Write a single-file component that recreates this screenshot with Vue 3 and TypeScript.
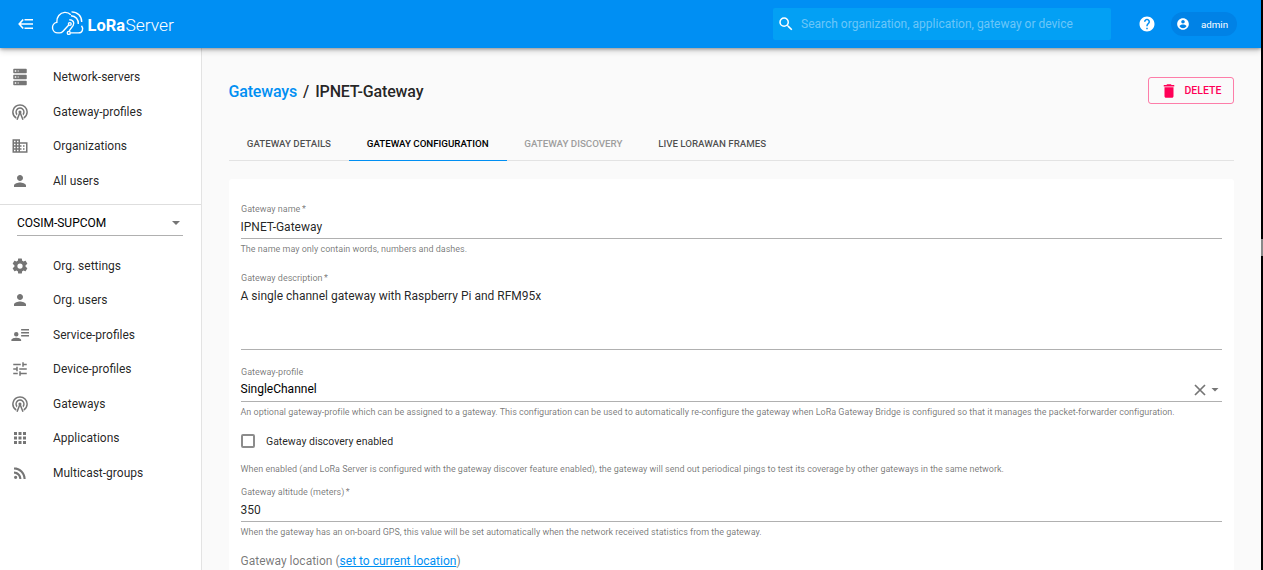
<script setup lang="ts">
const icons: Record<string, string> = {
  servers:
    'M4 1h16a1 1 0 0 1 1 1v4a1 1 0 0 1-1 1H4a1 1 0 0 1-1-1V2a1 1 0 0 1 1-1m0 8h16a1 1 0 0 1 1 1v4a1 1 0 0 1-1 1H4a1 1 0 0 1-1-1v-4a1 1 0 0 1 1-1m0 8h16a1 1 0 0 1 1 1v4a1 1 0 0 1-1 1H4a1 1 0 0 1-1-1v-4a1 1 0 0 1 1-1M9 5h1V3H9v2m0 8h1v-2H9v2m0 8h1v-2H9v2M5 3v2h2V3H5m0 8v2h2v-2H5m0 8v2h2v-2H5z',
  radio:
    'M12 10a2 2 0 0 1 2 2c0 .5-.18.95-.48 1.3l3.34 8.74-1.87.71L12 15l-2.99 7.75-1.87-.71 3.34-8.74A2 2 0 0 1 12 10m0-4.200a6.200 6.200 0 0 1 6.200 6.200c0 1.800-.8 3.400-2 4.500l-.78-2.030A4.200 4.200 0 0 0 12 7.800a4.200 4.200 0 0 0-3.420 6.670l-.78 2.030A6.200 6.200 0 0 1 12 5.800m0-4.300a10.500 10.500 0 0 1 10.500 10.500c0 3.900-2.100 7.200-5.200 9l-.72-1.900A8.500 8.500 0 0 0 12 3.500a8.500 8.500 0 0 0-4.580 15.600l-.72 1.900A10.500 10.500 0 0 1 12 1.500z',
  domain:
    'M12 7V3H2v18h20V7H12zM6 19H4v-2h2v2zm0-4H4v-2h2v2zm0-4H4V9h2v2zm0-4H4V5h2v2zm4 12H8v-2h2v2zm0-4H8v-2h2v2zm0-4H8V9h2v2zm0-4H8V5h2v2zm10 12h-8v-2h2v-2h-2v-2h2v-2h-2V9h8v10zm-2-8h-2v2h2v-2zm0 4h-2v2h2v-2z',
  person:
    'M12 12c2.21 0 4-1.79 4-4s-1.79-4-4-4-4 1.79-4 4 1.79 4 4 4zm0 2c-2.67 0-8 1.34-8 4v2h16v-2c0-2.66-5.33-4-8-4z',
  settings:
    'M12 15.5A3.5 3.5 0 0 1 8.5 12 3.5 3.5 0 0 1 12 8.500a3.5 3.500 0 0 1 3.500 3.500 3.500 3.500 0 0 1-3.500 3.500m7.430-2.530c.04-.32.07-.64.07-.97 0-.33-.03-.66-.07-1l2.110-1.630c.19-.15.24-.42.12-.64l-2-3.460c-.12-.22-.39-.31-.61-.22l-2.490 1c-.52-.39-1.060-.73-1.690-.98l-.37-2.650A.506.506 0 0 0 14 2h-4c-.25 0-.46.18-.5.42l-.37 2.650c-.63.25-1.170.59-1.690.98l-2.490-1c-.22-.09-.49 0-.61.22l-2 3.460c-.13.22-.07.49.12.64L4.570 11c-.04.34-.07.67-.07 1 0 .33.03.65.07.97l-2.110 1.660c-.19.15-.25.42-.12.64l2 3.460c.12.22.39.3.61.22l2.490-1.010c.52.4 1.060.74 1.690.99l.37 2.650c.04.24.25.42.5.42h4c.25 0 .46-.18.5-.42l.37-2.650c.63-.26 1.170-.59 1.690-.99l2.490 1.010c.22.08.49 0 .61-.22l2-3.460c.12-.22.07-.49-.12-.64l-2.110-1.660z',
  details:
    'M13.500 4h10.500v2H13.500zm0 4h10.500v2H13.500zm0 4h10.500v2H13.500zM7 8a3 3 0 1 1 0 6 3 3 0 0 1 0-6zM.5 20v-1.500c0-2 4-3 6.500-3s6.500 1 6.500 3V20z',
  tune:
    'M3 17v2h6v-2H3zM3 5v2h10V5H3zm10 16v-2h8v-2h-8v-2h-2v6h2zM7 9v2H3v2h4v2h2V9H7zm14 4v-2H11v2h10zm-6-4h2V7h4V5h-4V3h-2v6z',
  apps: 'M4 8h4V4H4v4zm6 12h4v-4h-4v4zm-6 0h4v-4H4v4zm0-6h4v-4H4v4zm6 0h4v-4h-4v4zm6-10v4h4V4h-4zm-6 4h4V4h-4v4zm6 6h4v-4h-4v4zm0 6h4v-4h-4v4z',
  rss: 'M6.180 15.640a2.180 2.180 0 1 1 0 4.360 2.180 2.180 0 0 1 0-4.360zM4 4.440v2.830c7.030 0 12.730 5.700 12.730 12.730h2.830c0-8.590-6.970-15.560-15.560-15.560zm0 5.660v2.830c3.900 0 7.070 3.170 7.070 7.070h2.830c0-5.470-4.430-9.900-9.900-9.900z',
}

interface NavItem {
  label: string
  icon: string
}
const globalNav: NavItem[] = [
  { label: 'Network-servers', icon: 'servers' },
  { label: 'Gateway-profiles', icon: 'radio' },
  { label: 'Organizations', icon: 'domain' },
  { label: 'All users', icon: 'person' },
]
const orgNav: NavItem[] = [
  { label: 'Org. settings', icon: 'settings' },
  { label: 'Org. users', icon: 'person' },
  { label: 'Service-profiles', icon: 'details' },
  { label: 'Device-profiles', icon: 'tune' },
  { label: 'Gateways', icon: 'radio' },
  { label: 'Applications', icon: 'apps' },
  { label: 'Multicast-groups', icon: 'rss' },
]
const tabs = [
  { label: 'Gateway details', state: '' },
  { label: 'Gateway configuration', state: 'active' },
  { label: 'Gateway discovery', state: 'disabled' },
  { label: 'Live LoRaWAN frames', state: '' },
]
</script>

<template>
  <div class="shell">
    <div class="app">
      <header class="bar">
        <svg class="menu" viewBox="0 0 16 14"><path d="M5.200 2.500L1.200 7l4 4.500M1.500 7H15M6.500 2.800H15M6.500 11.200H15" /></svg>
        <svg class="logo" viewBox="0 0 124 28">
          <g class="cloud">
            <path d="M17.800 16l-6 6.400c-.9 1-1.800 1.500-3.200 1.500H7A5.300 5.300 0 0 1 5.800 13.400C5.300 8 9 3.700 13.800 3.400c2.500-.1 4.400.7 6 2.400" />
            <path d="M19.800 23.900H27.500c4 0 5.300-4.300 3-7.200" />
            <path d="M20 6.700c4.800.3 7.600 3.800 7.300 8.300" />
            <path d="M20.500 2.900c6.200 0 10.300 4.400 10.200 10" />
            <path d="M18.300 10.700c3.600 0 5.500 2.900 3.900 5.600l-4 5.500" />
            <circle cx="18.800" cy="15" r="1.400" />
            <circle cx="17.800" cy="23.900" r="1.500" />
          </g>
          <text x="36.500" y="22" class="bold" textLength="37.500" lengthAdjust="spacingAndGlyphs">LoRa</text>
          <text x="74.500" y="22" class="light" textLength="48.500" lengthAdjust="spacingAndGlyphs">Server</text>
        </svg>
        <div class="search">
          <svg viewBox="0 0 24 24"><path d="M15.500 14h-.79l-.28-.27A6.470 6.470 0 0 0 16 9.500 6.500 6.500 0 1 0 9.500 16c1.610 0 3.090-.59 4.230-1.570l.27.28v.79l5 4.990L20.490 19l-4.990-5zm-6 0C7.010 14 5 11.990 5 9.500S7.010 5 9.500 5 14 7.010 14 9.500 11.990 14 9.500 14z" /></svg>
          <span>Search organization, application, gateway or device</span>
        </div>
        <svg class="help" viewBox="0 0 24 24"><path d="M12 2C6.480 2 2 6.480 2 12s4.480 10 10 10 10-4.480 10-10S17.520 2 12 2zm1 17h-2v-2h2v2zm2.070-7.750l-.9.920C13.450 12.900 13 13.500 13 15h-2v-.5c0-1.100.45-2.100 1.170-2.830l1.240-1.260c.37-.36.59-.86.59-1.410 0-1.100-.9-2-2-2s-2 .9-2 2H8c0-2.210 1.790-4 4-4s4 1.790 4 4c0 .88-.36 1.680-.93 2.250z" /></svg>
        <div class="user">
          <svg viewBox="0 0 24 24"><path d="M12 2C6.480 2 2 6.480 2 12s4.480 10 10 10 10-4.480 10-10S17.520 2 12 2zm0 3c1.660 0 3 1.340 3 3s-1.340 3-3 3-3-1.340-3-3 1.340-3 3-3zm0 14.200a7.200 7.200 0 0 1-6-3.220c.03-1.990 4-3.080 6-3.080 1.990 0 5.970 1.090 6 3.080a7.200 7.200 0 0 1-6 3.220z" /></svg>
          <span>admin</span>
        </div>
      </header>

      <div class="body">
        <aside class="side">
          <nav>
            <a v-for="item in globalNav" :key="item.label" class="item">
              <svg viewBox="0 0 24 24"><path fill-rule="evenodd" :d="icons[item.icon]" /></svg>
              <span>{{ item.label }}</span>
            </a>
          </nav>
          <div class="org">
            <div class="org-select">
              <span>COSIM-SUPCOM</span>
              <i class="caret"></i>
            </div>
          </div>
          <nav class="second">
            <a v-for="item in orgNav" :key="item.label" class="item">
              <svg viewBox="0 0 24 24"><path fill-rule="evenodd" :d="icons[item.icon]" /></svg>
              <span>{{ item.label }}</span>
            </a>
          </nav>
        </aside>

        <main class="main">
          <div class="title">
            <h1><a>Gateways</a><span class="sep">/</span><span>IPNET-Gateway</span></h1>
            <button class="delete">
              <svg viewBox="0 0 24 24"><path d="M6 19c0 1.100.9 2 2 2h8c1.100 0 2-.9 2-2V7H6v12zM19 4h-3.500l-1-1h-5l-1 1H5v2h14V4z" /></svg>
              <span>DELETE</span>
            </button>
          </div>
          <div class="tabs">
            <div v-for="tab in tabs" :key="tab.label" class="tab" :class="tab.state">{{ tab.label }}</div>
          </div>
          <section class="card">
            <div class="field name">
              <label>Gateway name<span class="star"> *</span></label>
              <div class="value">IPNET-Gateway</div>
              <p>The name may only contain words, numbers and dashes.</p>
            </div>
            <div class="field description">
              <label>Gateway description<span class="star"> *</span></label>
              <div class="value">A single channel gateway with Raspberry Pi and RFM95x</div>
            </div>
            <div class="field profile">
              <label>Gateway-profile</label>
              <div class="value">
                <span>SingleChannel</span>
                <svg class="clear" viewBox="0 0 12 12"><path d="M1 1l10 10M11 1L1 11" /></svg>
                <i class="caret"></i>
              </div>
              <p>An optional gateway-profile which can be assigned to a gateway. This configuration can be used to automatically re-configure the gateway when LoRa Gateway Bridge is configured so that it manages the packet-forwarder configuration.</p>
            </div>
            <div class="check"><i></i><span>Gateway discovery enabled</span></div>
            <p class="hint">When enabled (and LoRa Server is configured with the gateway discover feature enabled), the gateway will send out periodical pings to test its coverage by other gateways in the same network.</p>
            <div class="field altitude">
              <label>Gateway altitude (meters)<span class="star"> *</span></label>
              <div class="value">350</div>
              <p>When the gateway has an on-board GPS, this value will be set automatically when the network received statistics from the gateway.</p>
            </div>
            <div class="location">Gateway location (<a>set to current location</a>)</div>
          </section>
        </main>
      </div>
    </div>
    <div class="edge"><i></i></div>
  </div>
</template>

<style>
body {
  margin: 0;
  overflow: hidden;
}
</style>

<style scoped>
.shell {
  display: flex;
  width: 1263px;
  height: 570px;
  overflow: hidden;
  font-family: Roboto, "Liberation Sans", sans-serif;
  font-size: 12px;
  color: rgba(0, 0, 0, 0.87);
  background: #fafafa;
}
.shell * { box-sizing: border-box; }
.app { width: 1261px; display: flex; flex-direction: column; overflow: hidden; }
.edge { width: 2px; background: #000; padding-top: 239px; }
.edge i { display: block; height: 17px; background: #888; }
.bar {
  position: relative;
  z-index: 1;
  flex: none;
  height: 48px;
  display: flex;
  align-items: center;
  background: #008ff3;
  color: #fff;
  box-shadow: 0 1px 3px rgba(0, 0, 0, 0.3), 0 3px 6px rgba(0, 0, 0, 0.18);
}
.menu { width: 16px; height: 14px; margin-left: 18px; fill: none; stroke: #fff; stroke-width: 1.6; }
.logo { width: 124px; height: 28px; margin-left: 17px; margin-top: -2px; overflow: visible; }
.cloud { fill: none; stroke: #fff; stroke-width: 1.4; }
.logo text { fill: #fff; font-size: 17px; }
.logo .bold { font-weight: 700; }
.logo .light { font-weight: 300; }
.search {
  width: 338px;
  height: 32px;
  margin-left: auto;
  border-radius: 2px;
  display: flex;
  align-items: center;
  background: #03a0f4;
}
.search svg { width: 18px; height: 18px; margin: 0 6px 0 4px; fill: #fff; }
.search span { color: rgba(255, 255, 255, 0.42); white-space: nowrap; }
.help { width: 18px; height: 18px; margin-left: 27px; fill: #fff; }
.user {
  width: 66px;
  height: 24px;
  margin: 0 24px 0 15px;
  border-radius: 12px;
  background: #0082e6;
  display: flex;
  align-items: center;
  font-size: 9.750px;
}
.user svg { width: 14px; height: 14px; margin: 0 11px 0 5px; fill: #fff; }
.body { flex: 1; min-height: 0; display: flex; }
.side { width: 202px; flex: none; background: #fff; border-right: 1px solid #e3e3e3; padding-top: 12px; }
.item { height: 34.5px; display: flex; align-items: center; padding-left: 11px; }
.item svg { width: 18px; height: 18px; margin-right: 24px; fill: #757575; }
.org { height: 44.7px; margin-top: 6px; border-top: 1px solid #dedede; padding: 6px 18px 0 17px; }
.org-select {
  height: 25px;
  border-bottom: 1px solid #b0b0b0;
  display: flex;
  align-items: center;
  justify-content: space-between;
  color: #000;
}
.caret { width: 8px; height: 4px; margin-right: 3px; background: #757575; clip-path: polygon(0 0, 100% 0, 50% 100%); }
.main { flex: 1; min-width: 0; padding: 29px 27px 0; }
.title { display: flex; justify-content: space-between; height: 54px; }
h1 { margin: 0 0 0 -0.5px; font-size: 16px; line-height: 29px; font-weight: 500; letter-spacing: -0.16px; }
h1 a { color: #008ff3; }
.sep { margin: 0 6px; }
.delete {
  width: 86px;
  height: 27px;
  padding: 0 0 0 11px;
  border: 1px solid rgba(255, 0, 87, 0.5);
  border-radius: 3px;
  background: none;
  display: flex;
  align-items: center;
  color: #ff0057;
  font: 500 10.500px Roboto, sans-serif;
}
.delete svg { width: 18px; height: 18px; margin-right: 6.500px; fill: currentColor; }
.tabs { display: flex; height: 30px; border-bottom: 1px solid #e3e3e3; }
.tab {
  height: 30px;
  padding: 6px 18px 0;
  line-height: 14px;
  font-size: 9.750px;
  font-weight: 500;
  letter-spacing: -0.02px;
  text-indent: -0.2px;
  text-transform: uppercase;
  color: rgba(0, 0, 0, 0.7);
}
.tab.active { color: #000; border-bottom: 1px solid #008ff3; }
.tab.disabled { color: #9e9e9e; }
.card { height: 500px; margin-top: 18px; padding: 24px 12px 0; border-radius: 3px; background: #fff; }
.field label, .field p, .hint { display: block; margin: 0; font-size: 9px; line-height: 12px; color: rgba(0, 0, 0, 0.54); white-space: nowrap; }
.field p, .hint { letter-spacing: -0.005px; text-indent: -0.5px; }
.star { margin-left: -0.7px; }
.value { height: 24px; border-bottom: 1px solid #b0b0b0; line-height: 24px; text-indent: -0.5px; }
.value + p { margin-top: 4px; }
.name { height: 69px; }
.description { height: 94px; }
.description .value { height: 66px; }
.profile .value { display: flex; align-items: center; color: #000; line-height: 22px; }
.profile .value span { margin-top: -1px; }
.clear { width: 12px; height: 12px; margin-left: auto; margin-right: 5px; stroke: #757575; stroke-width: 1.700; }
.check { display: flex; align-items: center; height: 18px; margin-top: 14px; font-size: 10.500px; }
.check i { width: 14px; height: 14px; margin-right: 11px; border: 2px solid #8c8c8c; border-radius: 2px; }
.hint { margin-top: 13px; }
.altitude { margin-top: 11px; }
.location { margin-top: 15px; line-height: 16px; color: rgba(0, 0, 0, 0.54); text-indent: -0.5px; }
.location a { color: #008ff3; text-decoration: underline; }
</style>
